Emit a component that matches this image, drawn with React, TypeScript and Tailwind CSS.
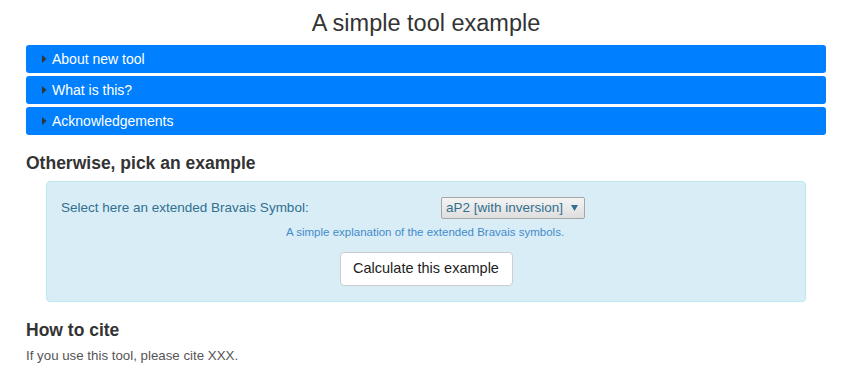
import { useState } from 'react';

const sections = ['About new tool', 'What is this?', 'Acknowledgements'];

function Caret() {
  return (
    <svg width="5" height="8" viewBox="0 0 5 8" className="shrink-0">
      <path d="M0 0 L4.5 4 L0 8 Z" fill="#333" />
    </svg>
  );
}

export default function App() {
  const [symbol] = useState('aP2 [with inversion]');

  return (
    <div className="w-[847px] h-[382px] bg-white text-[#333] font-['Liberation_Sans',Arial,sans-serif] overflow-hidden">
      <div className="ml-[26px] w-[800px]">
        <h1 className="text-center text-[23.5px] leading-[30px] font-light pt-[8px] h-[45px]">
          A simple tool example
        </h1>

        <div className="flex flex-col gap-[3px]">
          {sections.map(title => (
            <button
              key={title}
              className="h-[28px] w-full bg-[#0080ff] rounded-[3px] flex items-center gap-[5px] pl-[16px] text-white text-[14px] text-left"
            >
              <Caret />
              <span>{title}</span>
            </button>
          ))}
        </div>

        <h3 className="text-[17.5px] leading-[20px] font-bold mt-[18px] mb-[8px]">Otherwise, pick an example</h3>
      </div>

      <div className="mx-[46px] w-[760px] h-[121px] bg-[#d9edf7] border border-[#bce8f1] rounded-[4px] px-[14px] pt-[15px] text-[#31708f]">
        <div className="flex items-center h-[22px]">
          <span className="text-[13.5px] w-[380px]">Select here an extended Bravais Symbol:</span>
          <div className="h-[22px] w-[144px] border border-[#a6a6a6] rounded-[2px] bg-gradient-to-b from-[#f4f4f4] to-[#dedede] flex items-center justify-between pl-[4px] pr-[6px] text-[13.5px]">
            <span>{symbol}</span>
            <svg width="7" height="6" viewBox="0 0 7 6">
              <path d="M0 0 H7 L3.5 6 Z" fill="#31708f" />
            </svg>
          </div>
        </div>
        <div className="text-[11.5px] text-[#428bca] mt-[5px] pl-[225px]">
          A simple explanation of the extended Bravais symbols.
        </div>
        <div className="flex justify-center mt-[11px]">
          <button className="h-[34px] w-[173px] bg-white border border-[#ccc] rounded-[4px] text-[14.5px] text-[#222]">
            Calculate this example
          </button>
        </div>
      </div>

      <div className="ml-[26px] w-[800px]">
        <h3 className="text-[17.5px] leading-[20px] font-bold mt-[18px]">How to cite</h3>
        <p className="text-[13.3px] leading-[20px] mt-[6px] text-[#555]">If you use this tool, please cite XXX.</p>
      </div>
    </div>
  );
}
